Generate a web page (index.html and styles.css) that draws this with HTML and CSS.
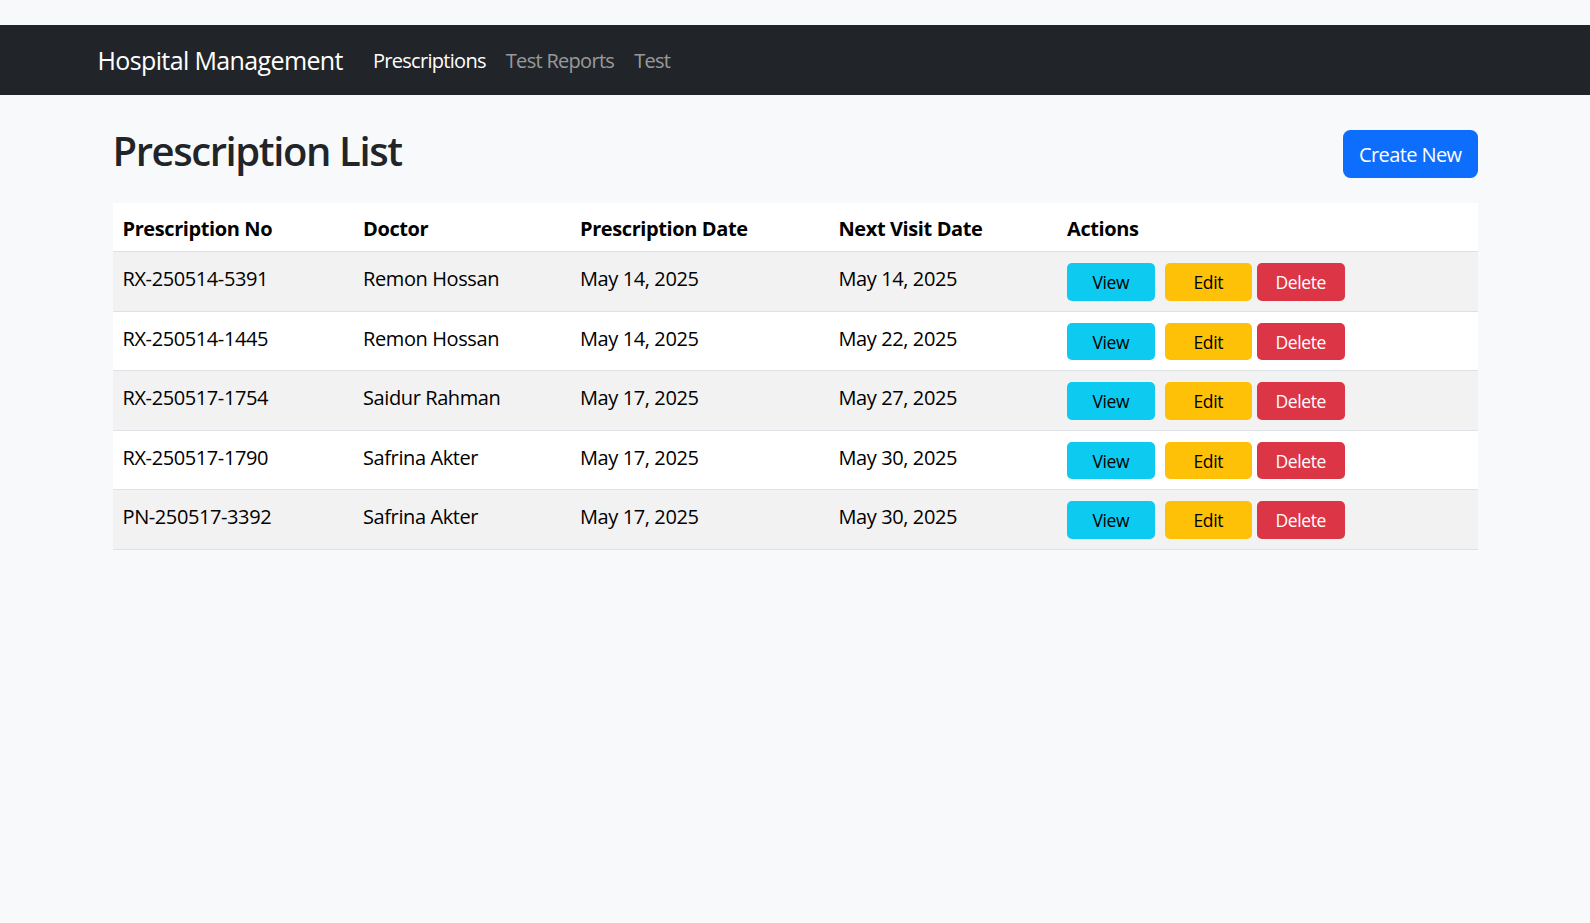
FILE: index.html
```html
<!DOCTYPE html>
<html lang="en">
<head>
<meta charset="utf-8">
<title>Prescription List</title>
<link rel="stylesheet" href="styles.css">
</head>
<body>
<nav class="navbar">
  <div class="nav-container">
    <a class="brand" href="#">Hospital Management</a>
    <a class="nav-link active" href="#">Prescriptions</a>
    <a class="nav-link" href="#">Test Reports</a>
    <a class="nav-link" href="#">Test</a>
  </div>
</nav>
<main class="container">
  <div class="content">
    <div class="page-head">
      <h2>Prescription List</h2>
      <a class="btn btn-primary" href="#">Create New</a>
    </div>
    <table class="table">
      <colgroup>
        <col class="c1"><col class="c2"><col class="c3"><col class="c4"><col>
      </colgroup>
      <thead>
        <tr><th>Prescription No</th><th>Doctor</th><th>Prescription Date</th><th>Next Visit Date</th><th>Actions</th></tr>
      </thead>
      <tbody>
        <tr><td>RX-250514-5391</td><td>Remon Hossan</td><td>May 14, 2025</td><td>May 14, 2025</td>
          <td><div class="actions"><a class="btn-sm btn-info" href="#">View</a><a class="btn-sm btn-warning" href="#">Edit</a><a class="btn-sm btn-danger" href="#">Delete</a></div></td></tr>
        <tr><td>RX-250514-1445</td><td>Remon Hossan</td><td>May 14, 2025</td><td>May 22, 2025</td>
          <td><div class="actions"><a class="btn-sm btn-info" href="#">View</a><a class="btn-sm btn-warning" href="#">Edit</a><a class="btn-sm btn-danger" href="#">Delete</a></div></td></tr>
        <tr><td>RX-250517-1754</td><td>Saidur Rahman</td><td>May 17, 2025</td><td>May 27, 2025</td>
          <td><div class="actions"><a class="btn-sm btn-info" href="#">View</a><a class="btn-sm btn-warning" href="#">Edit</a><a class="btn-sm btn-danger" href="#">Delete</a></div></td></tr>
        <tr><td>RX-250517-1790</td><td>Safrina Akter</td><td>May 17, 2025</td><td>May 30, 2025</td>
          <td><div class="actions"><a class="btn-sm btn-info" href="#">View</a><a class="btn-sm btn-warning" href="#">Edit</a><a class="btn-sm btn-danger" href="#">Delete</a></div></td></tr>
        <tr><td>PN-250517-3392</td><td>Safrina Akter</td><td>May 17, 2025</td><td>May 30, 2025</td>
          <td><div class="actions"><a class="btn-sm btn-info" href="#">View</a><a class="btn-sm btn-warning" href="#">Edit</a><a class="btn-sm btn-danger" href="#">Delete</a></div></td></tr>
      </tbody>
    </table>
  </div>
</main>
</body>
</html>
```

FILE: styles.css
```css
* { box-sizing: border-box; }
html, body { margin: 0; }
body {
  background: #f8f9fa;
  color: #212529;
  font-family: "Segoe UI", "Open Sans", "Noto Sans", sans-serif;
  font-size: 20px;
  line-height: 1.5;
  letter-spacing: -0.02em;
  padding-top: 25px;
}
a { text-decoration: none; }

.navbar { background: #212529; height: 70px; }
.nav-container {
  width: 1425px;
  margin: 0 auto;
  padding: 2px 15px 0;
  height: 100%;
  display: flex;
  align-items: center;
}
.brand {
  color: #fff;
  font-size: 25px;
  line-height: 37.5px;
  padding: 6px 0;
  margin-right: 20px;
  letter-spacing: -0.025em;
}
.nav-link {
  color: rgba(255,255,255,.55);
  font-size: 20px;
  line-height: 30px;
  padding: 10px;
  letter-spacing: -0.035em;
}
.nav-link.active { color: #fff; }

.container { width: 1425px; margin: 0 auto; padding: 0 15px; }
.content { padding: 0 15px; margin-top: 30px; }

.page-head {
  display: flex;
  justify-content: space-between;
  align-items: center;
  margin-bottom: 20px;
}
.page-head h2 {
  margin: 0 0 10px;
  padding-top: 2px;
  height: 48px;
  font-size: 40px;
  line-height: 48px;
  font-weight: 600;
  letter-spacing: -0.035em;
  color: #212529;
}
.btn {
  display: inline-block;
  height: 47.5px;
  font-size: 20px;
  line-height: 30px;
  padding: 8.5px 15px 7px;
  border-radius: 7.5px;
  border: 1px solid transparent;
  letter-spacing: -0.03em;
}
.btn-primary { background: #0d6efd; color: #fff; }

.table {
  width: 100%;
  border-collapse: collapse;
  table-layout: fixed;
  background: #fff;
  color: #000;
}
.c1 { width: 240.5px; }
.c2 { width: 217px; }
.c3 { width: 258.5px; }
.c4 { width: 228.5px; }
.table th, .table td {
  padding: 12px 10px 8px;
  line-height: 30px;
  text-align: left;
  vertical-align: top;
  border-bottom: 1px solid #dee2e6;
}
.table th { font-weight: 700; padding-top: 11px; padding-bottom: 7px; }
.table td:last-child { padding-top: 10px; padding-bottom: 10px; }
.table tbody tr:nth-child(odd) td { background: #f2f2f2; }

.actions { display: flex; align-items: center; padding-top: 1px; }
.btn-sm {
  display: inline-block;
  width: 87.5px;
  height: 37.5px;
  font-size: 17.5px;
  line-height: 37px;
  text-align: center;
  border-radius: 5px;
  border: 1px solid transparent;
}
.btn-info { background: #0dcaf0; color: #000; margin-right: 10px; }
.btn-warning { background: #ffc107; color: #000; margin-right: 5px; }
.btn-danger { background: #dc3545; color: #fff; }
```
